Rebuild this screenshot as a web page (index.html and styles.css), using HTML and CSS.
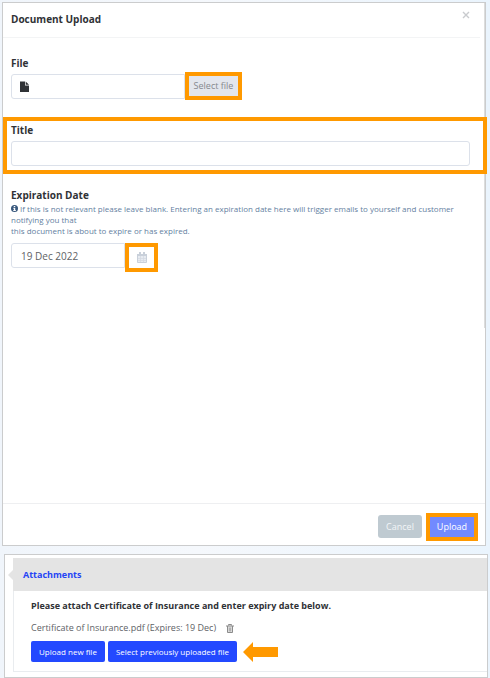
FILE: index.html
```html
<!DOCTYPE html>
<html lang="en">
<head>
<meta charset="utf-8">
<title>Document Upload</title>
<link rel="stylesheet" href="styles.css">
</head>
<body>
<form class="dialog">
  <span class="scroll-thumb"></span>
  <header class="dialog-header">
    <h1 class="dialog-title">Document Upload</h1>
    <button class="close" type="button" aria-label="Close">
      <svg width="8" height="8" viewBox="0 0 8 8"><path d="M1 1l6 6M7 1L1 7" stroke="#c9cbce" stroke-width="1.4" fill="none"/></svg>
    </button>
  </header>
  <div class="dialog-body">
    <div class="field file-field">
      <label class="label" for="file">File</label>
      <div class="row">
        <div class="file-box">
          <svg class="file-icon" width="9" height="11" viewBox="0 0 9 11"><path d="M0 .5h5v4h4V11H0z" fill="#303236"/><path d="M5.7.5L9 3.8H5.7z" fill="#303236"/></svg>
          <input class="input file-input" id="file" type="text" readonly>
        </div>
        <span class="highlight"><button class="select-file" type="button">Select file</button></span>
      </div>
    </div>
    <div class="field title-field highlight">
      <label class="label" for="title">Title</label>
      <input class="input" id="title" type="text">
    </div>
    <div class="field date-field">
      <label class="label" for="date">Expiration Date</label>
      <p class="hint"><svg class="info" width="7" height="7" viewBox="0 0 14 14"><circle cx="7" cy="7" r="7" fill="#37577c"/><path d="M5.5 2h3v2.200h-3zM4.500 5.500h4v4.500h1.200v2H4.500v-2h1.200V7.500H4.500z" fill="#fff"/></svg> If this is not relevant please leave blank. Entering an expiration date here will trigger emails to yourself and customer notifying you that<br>this document is about to expire or has expired.</p>
      <div class="row date-row">
        <input class="input date-input" id="date" type="text" value="19 Dec 2022">
        <span class="highlight"><button class="calendar" type="button" aria-label="Choose date">
          <svg width="10" height="11" viewBox="0 0 10 11"><path d="M.5 2.500h9v8h-9z" fill="#e7ebf1" stroke="#c9d0da"/><path d="M0 2h10v2H0z" fill="#c9d0da"/><path d="M2 0h2v3H2zM6 0h2v3H6z" fill="#c9d0da"/><path d="M3.500 4v6M6.500 4v6M1 6.500h8M1 8.500h8" stroke="#d3d9e1" stroke-width=".7"/></svg>
        </button></span>
      </div>
    </div>
  </div>
  <footer class="dialog-footer">
    <button class="cancel" type="button">Cancel</button>
    <span class="highlight"><button class="upload" type="button">Upload</button></span>
  </footer>
</form>
<section class="panel">
  <h2 class="panel-title">Attachments</h2>
  <div class="panel-body">
    <p class="request">Please attach Certificate of Insurance and enter expiry date below.</p>
    <div class="attachment">
      <span>Certificate of Insurance.pdf (Expires: 19 Dec)</span>
      <button class="trash" type="button" aria-label="Delete attachment">
        <svg width="8" height="9" viewBox="0 0 8 9"><path d="M2.500 1.500v-1h3v1M0 2h8M1.500 2v6.500h5V2" fill="#e4e4e4" stroke="#8b8b8b"/><path d="M3.300 3.500v4M4.700 3.500v4" stroke="#8b8b8b" stroke-width=".7"/></svg>
      </button>
    </div>
    <div class="actions">
      <button class="action" type="button">Upload new file</button>
      <button class="action" type="button">Select previously uploaded file</button>
      <svg class="arrow" width="36" height="20" viewBox="0 0 36 20"><path d="M0 10L10 0v5h25v10H10v5z" fill="#ff9900"/></svg>
    </div>
  </div>
</section>
</body>
</html>
```
FILE: styles.css
```css
* {
  box-sizing: border-box;
}

body {
  margin: 0;
  min-height: 100vh;
  padding: 2px 2px 0;
  display: flex;
  flex-direction: column;
  gap: 8px;
  background: linear-gradient(to right, #f0f5fb, #f5f8fc 40%, #eaf4fd);
  font-family: "Open Sans", "Liberation Sans", sans-serif;
  font-size: 9px;
  line-height: 14px;
  color: #606266;
}

h1, h2, p {
  margin: 0;
}

button {
  border: 0;
  padding: 0;
  background: none;
  font: inherit;
  cursor: pointer;
}

svg {
  display: block;
}

.dialog {
  position: relative;
  flex: 1;
  display: flex;
  flex-direction: column;
  margin-right: 2px;
  border: 1px solid #cbcccd;
  background: #fff;
}

.dialog-header {
  display: flex;
  justify-content: space-between;
  align-items: flex-start;
  height: 35px;
  margin-right: 5px;
  padding: 8px 10px 0 8px;
  border-bottom: 1px solid #f3f4f5;
}

.dialog-title,
.label {
  font-size: 10px;
  line-height: 16px;
  font-weight: 700;
  color: #303236;
}

.dialog-body {
  flex: 1;
}

.field {
  display: flex;
  flex-direction: column;
}

.file-field {
  gap: 1px;
  padding: 17px 8px 0;
}

.row {
  display: flex;
  align-items: center;
}

.file-box {
  position: relative;
  width: 174px;
}

.file-icon {
  position: absolute;
  left: 9px;
  top: 7px;
}

.input {
  width: 100%;
  height: 25px;
  padding: 0 9px;
  border: 1px solid #dce1ea;
  border-radius: 3px;
  background: #fff;
  font: inherit;
  font-size: 10px;
  color: #606266;
}

.file-input {
  display: block;
  padding-left: 24px;
  border-radius: 3px 0 0 3px;
}

.highlight {
  display: flex;
  border: 4px solid #ff9900;
}

.select-file {
  width: 49px;
  height: 20px;
  background: #e3e6ed;
  color: #85888e;
}

.title-field {
  position: relative;
  gap: 3px;
  margin: 17px -2px 0 0;
  padding: 1px 13px 4px 4px;
}

.date-field {
  padding: 13px 20px 0 8px;
}

.hint {
  font-size: 8px;
  line-height: 11px;
  color: #657f9f;
}

.info {
  display: inline-block;
}

.date-row {
  align-items: flex-start;
  margin-top: 7px;
}

.date-input {
  width: 114px;
  border-radius: 3px 0 0 3px;
}

.calendar {
  display: grid;
  place-items: center;
  width: 25px;
  height: 21px;
}

.scroll-thumb {
  position: absolute;
  right: 0;
  top: 0;
  width: 1px;
  height: 60%;
  background: #dcdddd;
}

.dialog-footer {
  display: flex;
  justify-content: flex-end;
  align-items: center;
  gap: 4px;
  height: 42px;
  padding: 4px 7px 0;
  border-top: 1px solid #eeeff1;
}

.cancel {
  width: 44px;
  height: 23px;
  border-radius: 3px;
  background: #bfcad1;
  color: #f2f5f7;
}

.upload {
  width: 44px;
  height: 20px;
  background: #728aff;
  color: #fff;
}

.panel {
  margin-left: 2px;
  padding: 3px 0 5px 8px;
  border: 1px solid #cbcccd;
  background: #fff;
}

.panel-title {
  position: relative;
  height: 33px;
  padding-left: 10px;
  background: #e4e4e4;
  font-size: 9px;
  line-height: 33px;
  font-weight: 700;
  color: #2545f5;
}

.panel-title::before {
  content: "";
  position: absolute;
  left: -5px;
  top: 12px;
  border: 5px solid transparent;
  border-left: 0;
  border-right-color: #e4e4e4;
}

.panel-body {
  padding: 8px 16px 9px 17px;
  border: 1px solid #e9ecef;
  border-width: 0 0 1px 1px;
}

.request {
  font-weight: 700;
  color: #303236;
}

.attachment {
  display: flex;
  align-items: center;
  gap: 10px;
  margin-top: 8px;
}

.actions {
  display: flex;
  align-items: center;
  gap: 3px;
  margin-top: 6px;
}

.action {
  height: 21px;
  padding: 0 8px;
  border-radius: 2px;
  background: #2349ff;
  color: #fff;
  font-size: 8px;
}

.arrow {
  margin-left: 3px;
}
```
